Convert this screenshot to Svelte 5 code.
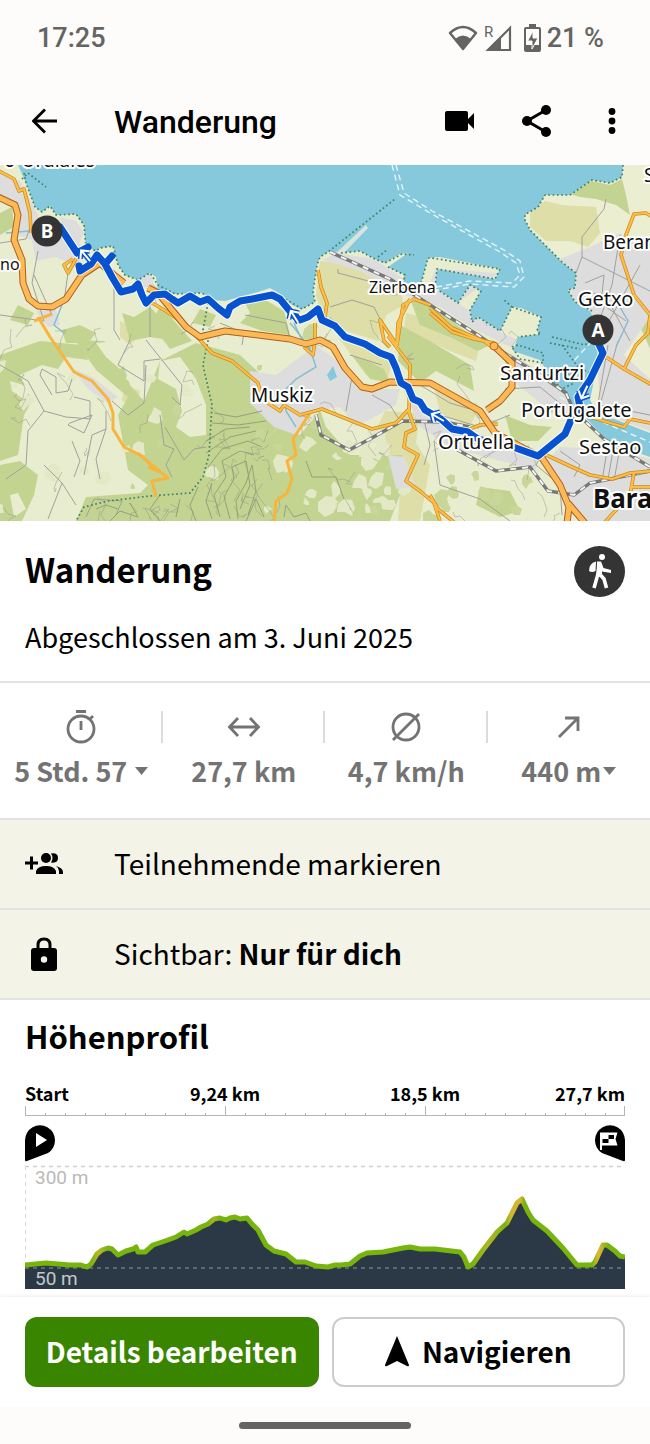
<script lang="ts">
  const stats = [
    { icon: 'time', value: '5 Std. 57', menu: true, spaced: true },
    { icon: 'distance', value: '27,7 km', menu: false, spaced: false },
    { icon: 'speed', value: '4,7 km/h', menu: false, spaced: false },
    { icon: 'ascent', value: '440 m', menu: true, spaced: false },
  ];

  const land =
    'M0 0H18L26 18L35 42L42 47L50 41L56 50L76 49L84 60L86 82L96 86L100 83L113 81L118 100L125 110L138 115L150 108L156 112L158 125L175 129L202 128L212 135L225 136L258 127L270 123L282 130L292 140L302 144L315 137L313 127L317 100L320 92L328 87L341 88L360 86L375 94L385 98L400 89L408 88L388 102L405 110L403 120L420 122L428 93L440 92L500 104L495 114L437 104L435 123L458 138L470 120L481 126L470 145L472 157L478 152L500 166L512 142L521 143L541 152L537 166L541 169L518 172L513 186L540 195L550 211L575 228L578 245L610 278L650 292V356H0Z';
  const eastLand =
    'M623 0L622 12L610 18L592 15L570 30L545 30L538 42L526 49L524 53L530 65L550 85L563 98L576 108L575 123L568 125L575 137L590 146L600 165L596 205L590 235L600 252L650 272V0Z';

  const woods = [
    'M0 48L12 42L14 62L0 70Z',
    'M0 190L40 176L82 180L88 195L66 192L58 204L42 200L20 210L32 236L24 250L18 290L0 296Z',
    'M0 300L20 296L38 310L34 330L22 356H0Z',
    'M75 175L104 176L120 190L130 220L144 236L160 196L196 178L240 190L300 246L262 276L270 356H76L86 332L140 328L148 320L128 305L118 250L128 232L96 205Z',
    'M18 140L34 148L28 160L10 155Z',
    'M62 165L80 160L96 168L88 178L66 178Z',
    'M122 148L134 152L150 142L186 178L150 172L130 176Z',
    'M160 140L176 158L192 176L170 184L152 160Z',
    'M245 138L264 134L284 146L290 170L262 166L240 158L250 148Z',
    'M200 144L216 150L210 162L192 158Z',
    'M262 276L280 262L300 270L320 245L326 262L350 290L402 290L412 318L400 330L390 356H264Z',
    'M345 182L352 190L372 198L384 204L390 218L370 214L352 190Z',
    'M400 160L430 176L470 200L474 226L436 206L420 218L398 196Z',
    'M410 134L430 140L468 168L490 180L478 186L450 172L420 160Z',
    'M505 250L530 260L552 262L538 276L512 276Z',
    'M480 322L510 326L520 346L500 352L476 340Z',
    'M566 28L592 16L610 20L622 14L626 30L630 50L616 40L596 34L580 32Z',
    'M634 150L650 138V184L644 170Z',
  ];

  const glades = [
    'M160 196L180 192L196 214L206 240L206 270L190 272L176 262L182 246L176 224L158 214Z',
    'M96 178L120 176L130 196L120 204L106 192Z',
    'M128 206L146 214L140 224L126 214Z',
    'M10 216L30 222L26 236L12 226Z',
    'M10 330L18 328L26 344L14 352Z',
    'M64 282L80 290L84 306L66 302Z',
  ];

  const meadows = [
    'M320 96L360 100L398 118L404 140L386 150L378 176L340 164L322 150L316 130Z',
    'M530 48L545 36L562 40L596 42L600 68L588 82L570 76L546 76L530 62Z',
    'M406 148L440 156L480 180L476 196L450 186L404 164Z',
    'M385 246L420 248L416 278L430 300L420 356H398L402 300L372 274Z',
    'M434 222L476 248L470 262L440 248Z',
    'M120 156L142 168L130 180L120 172Z',
    'M124 220L140 226L136 242L122 236Z',
    'M146 256L162 264L160 280L134 274Z',
    'M194 286L206 284L204 314L192 310Z',
    'M338 172L360 180L392 196L388 214L366 210Z',
  ];

  const towns = [
    'M0 8L20 16L34 42L42 60L34 76L18 70L14 44L0 30Z',
    'M30 66L64 60L84 84L78 102L56 92L36 96Z',
    'M60 52L76 56L84 68L78 80L64 72Z',
    'M36 146L56 144L60 160L48 162Z',
    'M138 114L150 107L155 122L140 122Z',
    'M70 202L92 212L118 232L108 238L88 224Z',
    'M250 206L276 210L316 180L342 200L362 224L400 224L396 240L356 262L340 242L312 246L296 270L274 262L250 238Z',
    'M322 95L336 88L374 94L404 114L428 122L436 104L498 108L458 138L502 168L516 174L510 182L470 162L440 142L404 130L360 106Z',
    'M402 222L424 246L448 262L500 274L540 288L536 304L500 296L450 282L420 262Z',
    'M510 188L548 212L574 236L566 250L540 238L506 210Z',
    'M560 94L590 82L620 68L650 86V152L624 190L650 214V266L600 248L596 166L574 134Z',
    'M560 282L610 284L650 294V356H580L560 316L546 296Z',
    'M388 290L404 292L416 322L396 324Z',
  ];

  const mainRoads = [
    'M-2 32L15 40L18 50L14 75L22 95L23 118L29 134L38 141L52 142L66 134L82 110L100 98L114 110L124 118',
    'M148 123L158 128L186 162L200 172L225 166L290 174L306 179L320 175L333 182L345 203L362 222L372 224L390 217L430 218L480 246L495 268L542 293L560 320L569 342L567 358',
    'M568 338L585 358',
    'M494 181L512 198L512 222L500 236L487 245',
  ];

  const roads = [
    'M-1 6L14 14L19 26L24 24L30 48L31 68',
    'M73 94L64 100L68 108L76 94',
    'M318 105L321 122L327 138L325 152',
    'M315 158V176L313 190L304 182',
    'M152 138L166 146L186 160L212 188L232 196L258 218L262 234L280 246L284 240L300 250L322 244L372 264L396 258L408 245L415 264L406 268L404 282L418 290L406 316L420 326L434 338L440 356',
    'M410 134L398 158L397 180L380 155L384 176L390 182',
    'M430 140L414 134L403 140L397 180',
    'M388 171L410 200L409 246',
    'M430 143L452 163L484 176L492 182',
    'M430 148L452 167L474 174L494 178L510 200',
    'M652 52L646 48L634 49L626 70L621 90L634 130L650 150L648 168L636 180L624 204',
    'M606 192L624 204L652 220',
    'M590 252L624 262L630 254L650 258',
    'M542 288L572 302L590 310L612 314L630 308L652 306',
    'M634 308L630 330L604 358',
    'M470 264L480 260L498 259',
    'M430 330L438 344L455 358',
    'M630 322L652 322',
  ];

  const localRoads = [
    'M38 152L50 172L74 207L92 216L108 234L113 248L113 264L124 282L140 290L152 300L168 313L152 316L156 332',
    'M52 149L34 156',
    'M138 288L158 306L148 302',
    'M310 248L293 274L296 290L287 296L292 314L287 328L276 336L274 358',
  ];

  const rails = [
    'M330 87L390 114L430 140L478 170L498 184L540 210L566 228L574 246L604 274L650 302',
    'M316 250L321 270L349 285L370 274L402 256L445 257L470 262',
    'M456 284L496 306L530 302L548 326L574 330L590 318L650 306',
  ];

  const coast = [
    'M24 8L26 18L35 42L42 47L50 41L56 50L76 49L84 60L86 82L96 86L100 83L113 81L118 100L125 110L138 115L150 108L158 120L175 129L202 128L212 135',
    'M22 14L28 8L46 22',
    'M282 132L302 144L315 137L313 127L317 100L320 92L328 87L395 34',
    'M341 88L360 86L375 94L385 98L402 89L414 90',
    'M388 102L405 110L403 120M378 92L388 84M420 122L428 93L432 93L500 104L495 114L437 104L435 123L458 138L470 120L481 126L470 145L472 157L478 152L500 166L512 142L503 134M512 142L541 152L537 166L541 169L518 172',
    'M623 0L622 12L610 18L592 15L570 30L545 30L538 42L526 49L524 53L530 65L550 85L563 98L576 108L575 123L568 125L575 137L592 146',
    'M552 172L585 180L592 174M512 182L518 180L543 188V198L520 194Z',
    'M208 138L203 165L208 176L203 200L212 240L209 290L203 312L190 328L150 331L108 336L84 342L76 356',
    'M562 180L578 202L590 208M550 178L580 184',
    'M548 210L566 206L574 218L562 224Z',
  ];

  const paths = [
    'M86 352L94 334L122 336L116 350M0 78L26 74M38 86L32 118L44 156L0 150',
    'M34 110L52 150M26 74L30 62M64 136L68 108',
    'M0 200L28 216L44 246L66 252L90 254L90 236L74 232M44 246L28 266L26 300L6 314',
    'M52 230L40 210L42 204L56 212L56 228L68 226L72 214',
    'M70 258L92 250L84 268L68 260Z',
    'M74 312L80 296L72 276M100 314L96 294L106 264L106 246M84 310L92 270L106 264',
    'M44 300L62 318L48 354M62 318L76 340',
    'M146 175L182 220L180 240L172 232M130 175L118 200L144 216L144 196L160 194',
    'M112 236L128 250L144 238L146 200',
    'M150 135L150 172M114 120L114 165L120 175',
    'M160 250L164 280L174 284L166 300L172 312M165 262L184 295L194 284L206 282',
    'M330 142L352 135L374 142L380 154M338 104V108L376 118',
    'M245 150L286 158L290 174M220 158L244 168L242 180',
    'M606 34L604 44L582 72L582 92L650 126M582 92L576 108M620 70L612 120L596 165',
    'M585 118L604 110L602 130L585 126M604 165L640 100M630 176L606 132M606 142L626 156',
    'M618 176L600 240L650 250M608 180L596 250M540 292L536 300L560 320L562 350',
    'M608 280L602 316M614 280L608 314M620 282L614 316M560 286L580 300L574 312',
    'M505 224L540 222L562 240M440 250L480 262L510 250',
    'M434 276L440 320L480 334L510 356M420 220L450 238L470 244',
    'M372 230L390 240L400 256M424 255L430 280L424 300',
    'M350 190L382 200M352 212L346 246',
  ];

  const contours = [
    'M206 276L226 264L250 262M206 288L230 272L256 266M208 302L222 284L248 276L262 282',
    'M214 248L236 252L262 246M212 258L238 260L266 256',
    'M220 352L214 330L226 312L222 296L240 286L254 290',
    'M230 354L224 332L234 314L232 302L246 296L250 320L240 344',
    'M238 354L236 336L246 318L252 300L256 326L248 350',
    'M212 318L206 336L212 354M198 322L190 340L196 356M180 334L176 352M246 356L256 334L264 352',
    'M160 330L150 344L160 356M130 338L138 352L120 346L110 356M96 344L106 340L118 344',
    'M284 352L286 340L294 352L306 348L310 356M306 296L312 312L336 312L344 334',
  ];

  const streams = [
    'M290 158L296 165L310 184L316 202L296 214L284 226L286 246L296 262',
    'M620 142L628 156L616 182M294 158L302 175M6 68L30 66',
    'M62 140L54 160L64 168',
  ];

  const route =
    'M60 62L77 88L88 82M79 101L80 106L91 99L97 90L105 99L112 91M105 99L112 112L121 127L133 124L138 119L142 130L146 138L154 130L165 129L172 134L178 138L190 131L200 137L208 134L218 143L227 150L230 142L240 136L252 134L272 130L280 134L293 150L300 155L308 152L318 144L322 155L335 161L345 172L365 179L380 188L391 192L396 203L401 218L408 222L413 234L420 237L425 245L432 249L441 254L452 264L468 267L478 274L500 280L513 282L538 291L565 269L571 255L580 242L578 232L590 215L603 188L597 175';

  const arrows = [
    { x: 85, y: 90, angle: -40 },
    { x: 294, y: 151, angle: -32 },
    { x: 437, y: 252, angle: -60 },
    { x: 584, y: 228, angle: 205 },
  ];

  const places = [
    { name: 'o-Urdiales', x: 4, y: 2, size: 19 },
    { name: 'no', x: 0, y: 105, size: 16 },
    { name: 'Zierbena', x: 369, y: 128, size: 16 },
    { name: 'S', x: 644, y: 17, size: 19 },
    { name: 'Beran', x: 603, y: 84, size: 19 },
    { name: 'Getxo', x: 578, y: 141, size: 20 },
    { name: 'Muskiz', x: 251, y: 237, size: 19 },
    { name: 'Santurtzi', x: 500, y: 215, size: 20 },
    { name: 'Portugalete', x: 521, y: 252, size: 20 },
    { name: 'Ortuella', x: 438, y: 284, size: 20 },
    { name: 'Sestao', x: 579, y: 289, size: 20 },
  ];

  // small seeded generator so the terrain texture is stable between renders
  let seed = 7;
  function rand() {
    seed = (seed * 16807) % 2147483647;
    return seed / 2147483647;
  }

  function blob(x: number, y: number, r: number) {
    const n = 7;
    let d = '';
    for (let i = 0; i < n; i++) {
      const a = (i / n) * Math.PI * 2;
      const k = r * (0.4 + rand() * 0.8);
      d += `${i ? 'L' : 'M'}${Math.round(x + Math.cos(a) * k)} ${Math.round(y + Math.sin(a) * k)}`;
    }
    return d + 'Z';
  }

  function scratch(x: number, y: number) {
    let d = `M${Math.round(x)} ${Math.round(y)}`;
    for (let i = 0; i < 4; i++) {
      d += `l${Math.round((rand() - 0.5) * 18)} ${Math.round(rand() * 16 - 4)}`;
    }
    return d;
  }

  const clearings = [
    ...Array.from({ length: 30 }, () => blob(rand() * 420, 200 + rand() * 156, 4 + rand() * 6)),
    ...Array.from({ length: 20 }, () => blob(305 + rand() * 90, 262 + rand() * 90, 4 + rand() * 7)),
  ];
  const copses = [
    ...Array.from({ length: 24 }, () => blob(120 + rand() * 440, 140 + rand() * 216, 3 + rand() * 8)),
    ...Array.from({ length: 10 }, () => blob(440 + rand() * 90, 310 + rand() * 44, 3 + rand() * 7)),
  ];
  const tracks = [
    ...Array.from({ length: 60 }, () => scratch(rand() * 560, 110 + rand() * 240)),
    ...Array.from({ length: 16 }, () => scratch(200 + rand() * 70, 250 + rand() * 90)),
    ...Array.from({ length: 10 }, () => scratch(80 + rand() * 130, 330 + rand() * 20)),
  ];

  const profile =
    'M0 100L21 98L45 100L56 100L62 102L66 99L72 89L77 85L83 83L87 84L93 90L101 86L108 84L111 82L113 87L120 87L128 80L140 76L151 72L159 67L162 69L171 65L176 62L183 59L189 54L195 53L201 55L205 53L210 52L215 54L222 53L227 59L233 65L241 80L249 86L261 89L271 97L280 97L291 101L303 102L310 100L316 100L325 99L335 91L342 88L358 87L368 85L378 83L385 82L395 84L410 84L435 87L439 92L443 102L448 99L458 85L472 67L482 58L492 38L497 34L503 47L508 55L522 66L538 83L552 100L567 100L570 97L578 80L582 80L590 86L595 91L600 92';
  const minorTicks = Array.from({ length: 31 }, (_, i) => i * 20);
</script>

<div class="screen">
  <div class="status-bar">
    <span>17:25</span>
    <div class="status-icons">
      <svg class="wifi" viewBox="0 0 30 26" aria-hidden="true">
        <path d="M2 8Q15 -4 28 8L15 24Z" fill="none" stroke="#666462" stroke-width="2.4" stroke-linejoin="round" />
        <path d="M7 14Q15 7 23 14L15 25Z" fill="#666462" />
      </svg>
      <svg class="signal" viewBox="0 0 28 28" aria-hidden="true">
        <text x="0" y="13" font-size="15" font-family="Roboto, sans-serif" fill="#666462">R</text>
        <path d="M26 4V26H4Z" fill="none" stroke="#666462" stroke-width="2.2" />
        <path d="M17 13V26H3Z" fill="#666462" />
      </svg>
      <svg class="battery" viewBox="0 0 17 28" aria-hidden="true">
        <path d="M5 0H12V3H15Q17 3 17 5V26Q17 28 15 28H2Q0 28 0 26V5Q0 3 2 3H5Z" fill="#666462" />
        <path d="M2 5H15V21H2Z" fill="#fdfcfa" />
        <path d="M9 7L3.500 17H8V25L14 14H9Z" fill="#666462" stroke="#fdfcfa" />
      </svg>
      <span>21 %</span>
    </div>
  </div>

  <header class="app-bar">
    <button class="icon-button" aria-label="Zurück">
      <svg width="26" height="26" viewBox="0 0 26 26" aria-hidden="true">
        <path d="M25 13H2M13 1.500L1.500 13L13 24.500" fill="none" stroke="#000" stroke-width="2.800" />
      </svg>
    </button>
    <h1>Wanderung</h1>
    <div class="app-actions">
      <button class="icon-button" aria-label="Video">
        <svg width="30" height="20" viewBox="0 0 30 20" aria-hidden="true">
          <path d="M2 0H21Q23 0 23 2V8L29 2V18L23 12V18Q23 20 21 20H2Q0 20 0 18V2Q0 0 2 0Z" />
        </svg>
      </button>
      <button class="icon-button" aria-label="Teilen">
        <svg width="30" height="32" viewBox="0 0 30 32" aria-hidden="true">
          <path d="M24 5L5 16L24 27" fill="none" stroke="#000" stroke-width="3" />
          <circle cx="24" cy="5" r="5" /><circle cx="5" cy="16" r="5" /><circle cx="24" cy="27" r="5" />
        </svg>
      </button>
      <button class="icon-button" aria-label="Mehr">
        <svg width="26" height="26" viewBox="0 0 26 26" aria-hidden="true">
          <circle cx="13" cy="3.500" r="3.400" /><circle cx="13" cy="13" r="3.400" /><circle cx="13" cy="22.500" r="3.400" />
        </svg>
      </button>
    </div>
  </header>

  <svg class="map" viewBox="0 0 650 356" preserveAspectRatio="xMidYMid slice" role="img" aria-label="Karte">
    <defs>
      <clipPath id="land-clip"><path d={land} /><path d={eastLand} /></clipPath>
    </defs>
    <rect width="650" height="356" fill="#86c8dc" />
    <path d="M336 88L366 60L368 63L344 88Z" fill="#d9e4da" />
    <path d={land} fill="#e9edd0" />
    <path d={eastLand} fill="#eceed2" />
    <g clip-path="url(#land-clip)">
      {#each meadows as d}<path {d} fill="#dedea8" />{/each}
      {#each woods as d}<path {d} fill="#c3d492" />{/each}
      {#each glades as d}<path {d} fill="#e8edd0" />{/each}
      {#each clearings as d}<path {d} fill="#e3e9c6" />{/each}
      {#each copses as d}<path {d} fill="#c8d799" />{/each}
      {#each towns as d}<path {d} fill="#dedddd" />{/each}
      <g fill="none" stroke="#95988a" stroke-width="0.700" opacity="0.700">
        {#each tracks as d}<path {d} />{/each}
      </g>
      <g fill="none" stroke="#8f9a78" stroke-width="0.900">
        {#each contours as d}<path {d} />{/each}
      </g>
      <g fill="none" stroke="#a0a09c" stroke-width="1">
        {#each paths as d}<path {d} />{/each}
      </g>
    </g>
    <path d="M546 197V186L520 184L545 176L592 180V208L580 238L604 250L650 268V286L612 280L578 244L552 216Z" fill="#86c8dc" />
    <path d="M327 210L333 201L337 212L330 216Z" fill="#86c8dc" />
    <g fill="none" stroke="#86bdd0" stroke-width="1.500">
      {#each streams as d}<path {d} />{/each}
    </g>
    <g fill="none" stroke="#3f8265" stroke-width="1.700" stroke-dasharray="1.700 2.600">
      {#each coast as d}<path {d} />{/each}
    </g>
    <g fill="none" stroke="#e3f5fa" stroke-width="1.400" stroke-dasharray="6 4">
      <path d="M392 0L400 30L430 48L500 87L516 98L520 110L512 118L470 116L436 122" />
      <path d="M396 0L404 28L432 46L504 85L520 96L524 112L514 122L470 119L436 125" />
      <path d="M560 232L600 256L652 278M592 176L572 198" />
    </g>

    <g fill="none">
      {#each rails as d}
        <path {d} stroke="#777" stroke-width="3.400" />
        <path {d} stroke="#f4f4f0" stroke-width="2" stroke-dasharray="6 6" />
      {/each}
    </g>
    <g fill="none" stroke-linejoin="round">
      {#each localRoads as d}<path {d} stroke="#f7b53d" stroke-width="3" />{/each}
      {#each roads as d}<path {d} stroke="#c98a19" stroke-width="3.600" />{/each}
      {#each roads as d}<path {d} stroke="#fdbd48" stroke-width="2.200" />{/each}
      {#each mainRoads as d}<path {d} stroke="#a95f20" stroke-width="7" />{/each}
      {#each mainRoads as d}<path {d} stroke="#fdb956" stroke-width="5" />{/each}
      <circle cx="494" cy="181" r="4" fill="#fdb956" stroke="#c5641a" />
      <path d={route} stroke="#fff" stroke-width="9" opacity="0.850" />
      <path d={route} stroke="#0652cf" stroke-width="7" stroke-linecap="round" />
    </g>
    {#each arrows as a}
      <g transform="translate({a.x} {a.y}) rotate({a.angle})" fill="none" stroke-linejoin="miter">
        <path d="M0 8V-6M-6 0L0 -6L6 0" stroke="#0652cf" stroke-width="5" />
        <path d="M0 8V-6M-6 0L0 -6L6 0" stroke="#fff" stroke-width="2" />
      </g>
    {/each}

    <g class="place">
      {#each places as p}<text x={p.x} y={p.y} font-size={p.size}>{p.name}</text>{/each}
      <text class="city" x="593" y="343" font-size="26">Bara</text>
    </g>
    <g class="pin">
      <circle cx="47" cy="66" r="15.500" />
      <text x="47" y="73">B</text>
      <circle cx="598" cy="165" r="15.500" />
      <text x="598" y="172">A</text>
    </g>
  </svg>

  <section class="summary">
    <div class="title-row">
      <h2>Wanderung</h2>
      <svg width="51" height="51" viewBox="0 0 51 51" role="img" aria-label="Wandern">
        <circle cx="25.500" cy="25.500" r="25.500" fill="#343434" />
        <circle cx="28" cy="11" r="3" fill="#fff" />
        <path d="M22 15.500Q15 17 15 25Q18 27 21.500 25Z" fill="#fff" />
        <path d="M25.500 17L24 28L20 42M25.500 28L30 33L32.500 42" fill="none" stroke="#fff" stroke-width="3.600" />
        <path d="M23 15.500H27L29.500 22L37 24V27L28 25.500V31H22.500Z" fill="#fff" />
      </svg>
    </div>
    <p>Abgeschlossen am 3. Juni 2025</p>
  </section>

  <section class="stats">
    {#each stats as stat}
      <div class="stat">
        <svg width="36" height="36" viewBox="0 0 36 36" fill="none" stroke="#737373" stroke-width="2.800" aria-hidden="true">
          {#if stat.icon === 'time'}
            <circle cx="18" cy="20" r="13" />
            <path d="M13 2.500H23M18 12V21M27 10L30 7" />
          {:else if stat.icon === 'distance'}
            <path d="M4 18H32M12 9L3.500 18L12 27M24 9L32.500 18L24 27" />
          {:else if stat.icon === 'speed'}
            <circle cx="18" cy="18" r="13" />
            <path d="M5 31L31 5" />
          {:else}
            <path d="M8 28L27 9M14 9H27V22" />
          {/if}
        </svg>
        {#if stat.menu}
          <button class="stat-value" class:spaced={stat.spaced}>
            {stat.value}
            <svg width="13" height="8" viewBox="0 0 13 8" aria-hidden="true"><path d="M0 0H13L6.500 8Z" fill="#737373" /></svg>
          </button>
        {:else}
          <span class="stat-value">{stat.value}</span>
        {/if}
      </div>
    {/each}
  </section>

  <button class="option">
    <svg width="38" height="22" viewBox="0 0 38 22" aria-hidden="true">
      <path d="M0 10H13M6.500 3.500V16.500" fill="none" stroke="#000" stroke-width="3" />
      <circle cx="21" cy="5" r="5" />
      <path d="M11 21V18Q13 13 21 13T31 18V21Z" />
      <path d="M26 .500Q33 -.500 33 5T26 9.500Q29 5 26 .500Z" />
      <path d="M31 13Q38 15 38 19V21H34V18Q34 15 31 13Z" />
    </svg>
    <span>Teilnehmende markieren</span>
  </button>
  <button class="option">
    <svg width="38" height="34" viewBox="0 0 38 34" aria-hidden="true">
      <path d="M13 13V8Q13 2 19 2T25 8V13" fill="none" stroke="#000" stroke-width="3" />
      <rect x="6" y="11" width="26" height="23" rx="3" />
      <circle cx="19" cy="22.500" r="3.200" fill="#f3f3e7" />
    </svg>
    <span>Sichtbar: <b>Nur für dich</b></span>
  </button>

  <section class="elevation">
    <h2>Höhenprofil</h2>
    <div class="axis-labels">
      <span>Start</span>
      <span>9,24 km</span>
      <span>18,5 km</span>
      <span>27,7 km</span>
    </div>
    <svg class="axis" viewBox="0 0 600 10" preserveAspectRatio="none" aria-hidden="true">
      <g stroke="#b5b5b5">
        <path d="M0 9.500H600" />
        {#each minorTicks as x}
          <path d="M{Math.min(x + 0.5, 599.5)} {x % 200 === 0 ? 0 : 7}V9" />
        {/each}
      </g>
    </svg>
    <div class="markers">
      <svg width="31" height="37" viewBox="0 0 31 37" aria-hidden="true">
        <path d="M0 15A15 15 0 1 1 23 28L2 36Q0 37 0 35Z" />
        <path d="M11 8L22 15L11 22Z" fill="#fff" />
      </svg>
      <svg width="31" height="37" viewBox="0 0 31 37" aria-hidden="true">
        <path d="M31 15A15 15 0 1 0 8 28L29 36Q31 37 31 35Z" />
        <path d="M6 7.500H23.500L21.500 14L23.500 20.500H8V25H6Z" fill="#fff" />
        <path d="M8.500 14H14.500V18H8.500ZM14.500 10H20V14H14.500Z" />
      </svg>
    </div>
    <svg class="chart" viewBox="0 0 600 124" preserveAspectRatio="none" role="img" aria-label="Höhenprofil">
      <defs>
        <linearGradient id="slope" gradientUnits="userSpaceOnUse" x1="0" y1="0" x2="600" y2="0">
          <stop offset="0.110" stop-color="#77b40c" />
          <stop offset="0.123" stop-color="#b9b82a" />
          <stop offset="0.138" stop-color="#77b40c" />
          <stop offset="0.305" stop-color="#77b40c" />
          <stop offset="0.315" stop-color="#a0b51c" />
          <stop offset="0.325" stop-color="#77b40c" />
          <stop offset="0.745" stop-color="#77b40c" />
          <stop offset="0.770" stop-color="#adb520" />
          <stop offset="0.785" stop-color="#a0b51c" />
          <stop offset="0.800" stop-color="#77b40c" />
          <stop offset="0.810" stop-color="#d3b630" />
          <stop offset="0.826" stop-color="#d3b630" />
          <stop offset="0.832" stop-color="#77b40c" />
          <stop offset="0.945" stop-color="#77b40c" />
          <stop offset="0.956" stop-color="#dfb735" />
          <stop offset="0.972" stop-color="#77b40c" />
        </linearGradient>
      </defs>
      <path d="M0 1.500H600" stroke="#cfcfcf" stroke-width="1.500" stroke-dasharray="4 4" />
      <path d="M0.500 1V98" stroke="#dadada" stroke-dasharray="4 4" />
      <path d="{profile}V124H0Z" fill="#2b3946" />
      <path d="M0 103H600" stroke="#8b949b" stroke-dasharray="4 4" />
      <path d={profile} fill="none" stroke="url(#slope)" stroke-width="5" stroke-linejoin="round" />
      <text x="10" y="19" fill="#b9b9b9">300 m</text>
      <text x="10" y="120" fill="#c3c8cb">50 m</text>
    </svg>
  </section>

  <footer class="actions">
    <button class="primary">Details bearbeiten</button>
    <button class="secondary">
      <svg width="24" height="31" viewBox="0 0 24 31" aria-hidden="true">
        <path d="M12 0L24 29Q24 31 22 30L12 25L2 30Q0 31 0 29Z" />
      </svg>
      Navigieren
    </button>
  </footer>

  <div class="gesture-bar"><span></span></div>
</div>

<style>
  :global(body) {
    margin: 0;
    background: #fff;
  }

  .screen {
    display: flex;
    flex-direction: column;
    font-family: 'Noto Sans CJK SC', sans-serif;
    color: #000;
    overflow: hidden;
  }

  .screen svg {
    flex-shrink: 0;
  }

  button {
    margin: 0;
    padding: 0;
    border: 0;
    background: none;
    font: inherit;
    color: inherit;
    cursor: pointer;
  }

  h1,
  h2,
  p {
    margin: 0;
  }

  .status-bar {
    display: flex;
    align-items: center;
    justify-content: space-between;
    height: 76px;
    padding: 0 46px 0 37px;
    background: #fdfcfa;
    font-family: Roboto, sans-serif;
    font-size: 27px;
    font-weight: 500;
    color: #666462;
  }

  .status-icons {
    display: flex;
    align-items: center;
    gap: 6px;
  }

  .wifi {
    width: 30px;
    height: 26px;
  }

  .signal {
    width: 28px;
    height: 28px;
    font-weight: 400;
  }

  .battery {
    width: 17px;
    height: 28px;
    margin-left: 6px;
  }

  .app-bar {
    display: flex;
    align-items: center;
    height: 89px;
    padding: 0 25px 0 32px;
    background: #fdfcfa;
  }

  .icon-button {
    display: flex;
  }

  .app-bar h1 {
    margin-left: 56px;
    padding-top: 2px;
    font-family: Roboto, sans-serif;
    font-size: 32px;
    font-weight: 500;
  }

  .app-actions {
    display: flex;
    align-items: center;
    gap: 47px;
    margin-left: auto;
  }

  .map {
    display: block;
    width: 100%;
    height: 356px;
  }

  .place {
    font-family: 'Noto Sans', sans-serif;
    fill: #111;
    stroke: #fff;
    stroke-width: 4px;
    stroke-linejoin: round;
    paint-order: stroke;
  }

  .city {
    font-weight: 700;
  }

  .pin {
    fill: #343434;
    font-family: 'Noto Sans', sans-serif;
    font-size: 19px;
    font-weight: 700;
    text-anchor: middle;
  }

  .pin text {
    fill: #fff;
  }

  .summary {
    padding: 25px 25px 24px;
    border-bottom: 2px solid #e2e2e2;
  }

  .title-row {
    display: flex;
    align-items: center;
    justify-content: space-between;
  }

  .title-row h2 {
    padding-bottom: 5px;
    font-size: 33px;
    line-height: 46px;
  }

  .summary p {
    margin-top: 20px;
    font-size: 27px;
    line-height: 40px;
  }

  .stats {
    display: grid;
    grid-template-columns: repeat(4, 1fr);
    padding: 26px 0 27px;
    border-bottom: 2px solid #e2e2e2;
  }

  .stat {
    display: flex;
    flex-direction: column;
    align-items: center;
    gap: 6px;
    background: linear-gradient(#dcdcdc, #dcdcdc) right 2px / 2px 32px no-repeat;
  }

  .stat:last-child {
    background: none;
  }

  .stat-value {
    display: flex;
    align-items: center;
    gap: 2px;
    font-size: 27px;
    font-weight: 700;
    line-height: 40px;
    color: #737373;
    white-space: nowrap;
  }

  .stat-value.spaced {
    gap: 8px;
  }

  .option {
    display: flex;
    align-items: center;
    gap: 51px;
    height: 90px;
    padding: 0 25px;
    border-bottom: 2px solid #e2e2e2;
    background: #f3f3e7;
    font-size: 28px;
    text-align: left;
  }

  .option span {
    padding-bottom: 2px;
  }

  .elevation {
    padding: 14px 25px 8px;
  }

  .elevation h2 {
    font-size: 31px;
    line-height: 44px;
  }

  .axis-labels {
    display: grid;
    grid-template-columns: 1fr 2fr 2fr 1fr;
    margin-top: 23px;
    font-size: 18px;
    font-weight: 700;
    line-height: 24px;
    text-align: center;
    white-space: nowrap;
  }

  .axis-labels span:first-child {
    text-align: left;
  }

  .axis-labels span:last-child {
    text-align: right;
  }

  .axis {
    display: block;
    width: 100%;
    height: 10px;
    margin-top: 1px;
  }

  .markers {
    display: flex;
    justify-content: space-between;
    padding: 9px 0 3px;
  }

  .chart {
    display: block;
    width: 100%;
    height: 124px;
    font-family: Roboto, sans-serif;
    font-size: 19px;
  }

  .actions {
    display: grid;
    grid-template-columns: 1fr 1fr;
    gap: 13px;
    padding: 20px 25px;
    box-shadow: 0 -1px 3px rgba(0, 0, 0, 0.08);
    font-size: 28px;
    font-weight: 700;
  }

  .actions button {
    display: flex;
    align-items: center;
    justify-content: center;
    gap: 13px;
    height: 70px;
    padding-bottom: 2px;
    border-radius: 12px;
    white-space: nowrap;
  }

  .actions .primary {
    background: #3a8500;
    color: #fff;
  }

  .actions .secondary {
    border: 2px solid #cccccc;
  }

  .gesture-bar {
    display: flex;
    justify-content: center;
    padding: 15px 0;
    background: #fdfcfa;
  }

  .gesture-bar span {
    width: 172px;
    height: 7px;
    border-radius: 4px;
    background: #666462;
  }
</style>
